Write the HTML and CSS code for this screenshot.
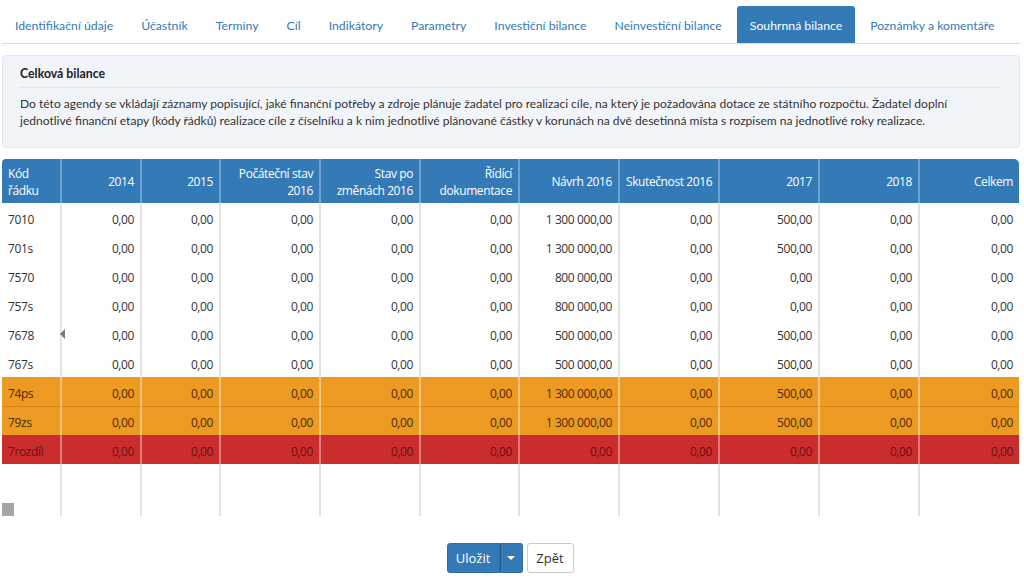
FILE: index.html
```html
<!DOCTYPE html>
<html lang="cs">
<head>
<meta charset="utf-8">
<title>Souhrnná bilance</title>
<link rel="stylesheet" href="styles.css">
</head>
<body>
<div class="page">
  <ul class="tabs">
    <li class="tab">Identifikační údaje</li>
    <li class="tab">Účastník</li>
    <li class="tab">Termíny</li>
    <li class="tab">Cíl</li>
    <li class="tab">Indikátory</li>
    <li class="tab">Parametry</li>
    <li class="tab">Investiční bilance</li>
    <li class="tab">Neinvestiční bilance</li>
    <li class="tab active">Souhrnná bilance</li>
    <li class="tab">Poznámky a komentáře</li>
  </ul>

  <div class="info">
    <div class="info-title">Celková bilance</div>
    <p class="info-text">Do této agendy se vkládají záznamy popisující, jaké finanční potřeby a zdroje plánuje žadatel pro realizaci cíle, na který je požadována dotace ze státního rozpočtu. Žadatel doplní<br>jednotlivé finanční etapy (kódy řádků) realizace cíle z číselníku a k nim jednotlivé plánované částky v korunách na dvě desetinná místa s rozpisem na jednotlivé roky realizace.</p>
  </div>

  <table class="grid">
    <colgroup>
      <col class="c-code"><col class="c-80"><col class="c-79"><col class="c-100"><col class="c-100"><col class="c-99"><col class="c-100"><col class="c-100"><col class="c-100"><col class="c-100"><col class="c-99">
    </colgroup>
    <thead>
      <tr>
        <th class="left">Kód<br>řádku</th>
        <th>2014</th>
        <th>2015</th>
        <th>Počáteční stav<br>2016</th>
        <th>Stav po<br>změnách 2016</th>
        <th>Řídící<br>dokumentace</th>
        <th>Návrh 2016</th>
        <th>Skutečnost 2016</th>
        <th>2017</th>
        <th>2018</th>
        <th>Celkem</th>
      </tr>
    </thead>
    <tbody>
      <tr><td>7010</td><td>0,00</td><td>0,00</td><td>0,00</td><td>0,00</td><td>0,00</td><td>1 300 000,00</td><td>0,00</td><td>500,00</td><td>0,00</td><td>0,00</td></tr>
      <tr><td>701s</td><td>0,00</td><td>0,00</td><td>0,00</td><td>0,00</td><td>0,00</td><td>1 300 000,00</td><td>0,00</td><td>500,00</td><td>0,00</td><td>0,00</td></tr>
      <tr><td>7570</td><td>0,00</td><td>0,00</td><td>0,00</td><td>0,00</td><td>0,00</td><td>800 000,00</td><td>0,00</td><td>0,00</td><td>0,00</td><td>0,00</td></tr>
      <tr><td>757s</td><td>0,00</td><td>0,00</td><td>0,00</td><td>0,00</td><td>0,00</td><td>800 000,00</td><td>0,00</td><td>0,00</td><td>0,00</td><td>0,00</td></tr>
      <tr><td class="marked">7678<span class="caret-left"></span></td><td>0,00</td><td>0,00</td><td>0,00</td><td>0,00</td><td>0,00</td><td>500 000,00</td><td>0,00</td><td>500,00</td><td>0,00</td><td>0,00</td></tr>
      <tr><td>767s</td><td>0,00</td><td>0,00</td><td>0,00</td><td>0,00</td><td>0,00</td><td>500 000,00</td><td>0,00</td><td>500,00</td><td>0,00</td><td>0,00</td></tr>
      <tr class="sum"><td>74ps</td><td>0,00</td><td>0,00</td><td>0,00</td><td>0,00</td><td>0,00</td><td>1 300 000,00</td><td>0,00</td><td>500,00</td><td>0,00</td><td>0,00</td></tr>
      <tr class="sum"><td>79zs</td><td>0,00</td><td>0,00</td><td>0,00</td><td>0,00</td><td>0,00</td><td>1 300 000,00</td><td>0,00</td><td>500,00</td><td>0,00</td><td>0,00</td></tr>
      <tr class="diff"><td>7rozdíl</td><td>0,00</td><td>0,00</td><td>0,00</td><td>0,00</td><td>0,00</td><td>0,00</td><td>0,00</td><td>0,00</td><td>0,00</td><td>0,00</td></tr>
      <tr class="filler"><td><div class="filler-cell"><span class="handle"></span></div></td><td></td><td></td><td></td><td></td><td></td><td></td><td></td><td></td><td></td><td></td></tr>
    </tbody>
  </table>

  <div class="actions">
    <div class="split">
      <button class="btn btn-primary">Uložit</button>
      <button class="btn btn-primary btn-caret"><span class="caret"></span></button>
    </div>
    <button class="btn btn-default">Zpět</button>
  </div>
</div>
</body>
</html>
```
FILE: styles.css
```css
* { box-sizing: border-box; }
html, body { margin: 0; padding: 0; background: #fff; }
body { font-family: "Lato", "Open Sans", sans-serif; color: #333; }

.page { width: 1018px; margin-left: 2px; }

.tabs {
  list-style: none;
  margin: 6px 0 0 0;
  padding: 0;
  display: flex;
  gap: 2px;
  border-bottom: 1px solid #ddd;
  height: 38px;
}
.tab {
  padding: 1px 13px 0 13px;
  height: 37px;
  line-height: 37px;
  font-size: 12.25px;
  color: #337ab7;
  border-radius: 3px 3px 0 0;
  white-space: nowrap;
}
.tab.active { background: #337ab7; color: #fff; }

.info {
  margin-top: 11px;
  background: #f1f4f9;
  border: 1px solid #e1e6ee;
  border-radius: 4px;
  padding: 10px 18px 21px 17px;
  height: 93px;
}
.info-title {
  font-weight: bold;
  font-size: 12.3px;
  color: #222;
  line-height: 16px;
  padding-bottom: 5px;
  border-bottom: 1px solid #e2e6ec;
}
.info-text {
  margin: 7px 0 0 0;
  font-size: 12.05px;
  line-height: 17px;
  color: #333;
  white-space: nowrap;
}

.grid {
  margin-top: 11px;
  width: 1017px;
  table-layout: fixed;
  border-collapse: separate;
  border-spacing: 0;
  font-family: "Open Sans", sans-serif;
  font-size: 12px;
  letter-spacing: -0.4px;
}
.c-code { width: 60px; }
.c-80 { width: 80px; }
.c-79 { width: 79px; }
.c-100 { width: 100px; }
.c-99 { width: 99px; }

.grid th {
  background: #337ab7;
  color: #fff;
  font-weight: normal;
  text-align: right;
  vertical-align: middle;
  height: 44px;
  line-height: 17px;
  padding: 1px 6px 0 6px;
  white-space: nowrap;
  border-right: 2px solid #6fa3d3;
}
.grid th:first-child { border-top-left-radius: 4px; }
.grid th:last-child { border-right: none; border-top-right-radius: 5px; }
.grid th.left { text-align: left; }

.grid td {
  height: 29px;
  padding: 3px 6px 0 6px;
  text-align: right;
  vertical-align: middle;
  white-space: nowrap;
  border-right: 2px solid #e3e3e3;
}
.grid td:first-child { text-align: left; }
.grid td:last-child { border-right: none; }

.marked { position: relative; }
.caret-left {
  position: absolute;
  right: -5px;
  top: 10px;
  width: 0; height: 0;
  border-top: 5px solid transparent;
  border-bottom: 5px solid transparent;
  border-right: 5px solid #777;
}

.sum td {
  background: #ec9a22;
  color: #4a2c06;
  border-right-color: #f4c47c;
}
.sum + .sum td { border-top: 1px solid #d7861a; }
.diff td {
  background: #ca2d2d;
  color: #6b1212;
  border-right-color: #e07b7b;
}
.filler td { height: 52px; vertical-align: bottom; padding: 0; }
.filler-cell { display: flex; align-items: flex-end; height: 52px; }
.handle { width: 12px; height: 13px; background: #a6a6a6; }

.actions {
  display: flex;
  justify-content: center;
  gap: 4px;
  margin-top: 27px;
  padding-right: 2px;
}
.split { display: flex; }
.btn {
  font-family: "Open Sans", sans-serif;
  font-size: 13px;
  height: 30px;
  border-radius: 3px;
  padding: 0 12px;
  cursor: pointer;
}
.btn-primary {
  background: #337ab7;
  color: #fff;
  border: 1px solid #2e6da4;
}
.split .btn-primary:first-child { border-radius: 3px 0 0 3px; width: 53px; padding: 0; }
.btn-caret {
  border-radius: 0 3px 3px 0;
  width: 23px;
  padding: 0;
  border-left: 1px solid #24598a;
  display: flex;
  align-items: center;
  justify-content: center;
}
.caret {
  width: 0; height: 0;
  border-left: 4px solid transparent;
  border-right: 4px solid transparent;
  border-top: 4px solid #fff;
}
.btn-default {
  background: #fff;
  color: #333;
  border: 1px solid #ccc;
  width: 47px;
  padding: 0;
}
```
